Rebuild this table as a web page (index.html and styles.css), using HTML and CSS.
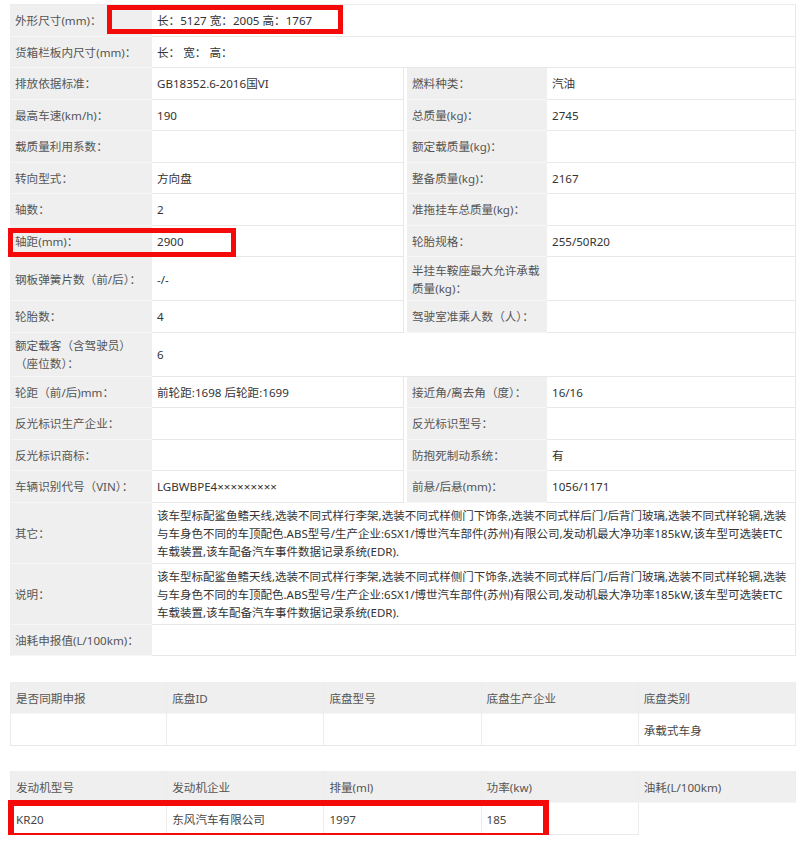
FILE: index.html
```html
<!DOCTYPE html>
<html lang="zh-CN">
<head>
    <meta charset="UTF-8">
    <title>车辆参数</title>
    <link rel="stylesheet" href="styles.css">
</head>
<body>
    <div class="sheet">
        <table class="params">
            <colgroup>
                <col class="c-label">
                <col class="c-value">
                <col class="c-label2">
                <col class="c-value2">
            </colgroup>
            <tr>
                <td class="label">外形尺寸(mm)：</td>
                <td class="value" colspan="3">长：5127 宽：2005 高：1767</td>
            </tr>
            <tr>
                <td class="label">货箱栏板内尺寸(mm)：</td>
                <td class="value" colspan="3">长：&nbsp;宽：&nbsp;高：</td>
            </tr>
            <tr>
                <td class="label">排放依据标准：</td>
                <td class="value">GB18352.6-2016国VI</td>
                <td class="label">燃料种类：</td>
                <td class="value">汽油</td>
            </tr>
            <tr>
                <td class="label">最高车速(km/h)：</td>
                <td class="value">190</td>
                <td class="label">总质量(kg)：</td>
                <td class="value">2745</td>
            </tr>
            <tr>
                <td class="label">载质量利用系数：</td>
                <td class="value"></td>
                <td class="label">额定载质量(kg)：</td>
                <td class="value"></td>
            </tr>
            <tr>
                <td class="label">转向型式：</td>
                <td class="value">方向盘</td>
                <td class="label">整备质量(kg)：</td>
                <td class="value">2167</td>
            </tr>
            <tr>
                <td class="label">轴数：</td>
                <td class="value">2</td>
                <td class="label">准拖挂车总质量(kg)：</td>
                <td class="value"></td>
            </tr>
            <tr>
                <td class="label">轴距(mm)：</td>
                <td class="value">2900</td>
                <td class="label">轮胎规格：</td>
                <td class="value">255/50R20</td>
            </tr>
            <tr class="tall">
                <td class="label">钢板弹簧片数（前/后）：</td>
                <td class="value">-/-</td>
                <td class="label">半挂车鞍座最大允许承载质量(kg)：</td>
                <td class="value"></td>
            </tr>
            <tr>
                <td class="label">轮胎数：</td>
                <td class="value">4</td>
                <td class="label">驾驶室准乘人数（人）：</td>
                <td class="value"></td>
            </tr>
            <tr class="tall">
                <td class="label">额定载客（含驾驶员）（座位数）：</td>
                <td class="value" colspan="3">6</td>
            </tr>
            <tr>
                <td class="label">轮距（前/后)mm：</td>
                <td class="value">前轮距:1698 后轮距:1699</td>
                <td class="label">接近角/离去角（度）：</td>
                <td class="value">16/16</td>
            </tr>
            <tr>
                <td class="label">反光标识生产企业：</td>
                <td class="value"></td>
                <td class="label">反光标识型号：</td>
                <td class="value"></td>
            </tr>
            <tr>
                <td class="label">反光标识商标：</td>
                <td class="value"></td>
                <td class="label">防抱死制动系统：</td>
                <td class="value">有</td>
            </tr>
            <tr>
                <td class="label">车辆识别代号（VIN）：</td>
                <td class="value">LGBWBPE4×××××××××</td>
                <td class="label">前悬/后悬(mm)：</td>
                <td class="value">1056/1171</td>
            </tr>
            <tr>
                <td class="label">其它：</td>
                <td class="value note" colspan="3">该车型标配鲨鱼鳍天线,选装不同式样行李架,选装不同式样侧门下饰条,选装不同式样后门/后背门玻璃,选装不同式样轮辋,选装与车身色不同的车顶配色.ABS型号/生产企业:6SX1/博世汽车部件(苏州)有限公司,发动机最大净功率185kW,该车型可选装ETC车载装置,该车配备汽车事件数据记录系统(EDR).</td>
            </tr>
            <tr>
                <td class="label">说明：</td>
                <td class="value note" colspan="3">该车型标配鲨鱼鳍天线,选装不同式样行李架,选装不同式样侧门下饰条,选装不同式样后门/后背门玻璃,选装不同式样轮辋,选装与车身色不同的车顶配色.ABS型号/生产企业:6SX1/博世汽车部件(苏州)有限公司,发动机最大净功率185kW,该车型可选装ETC车载装置,该车配备汽车事件数据记录系统(EDR).</td>
            </tr>
            <tr>
                <td class="label">油耗申报值(L/100km)：</td>
                <td class="value" colspan="3"></td>
            </tr>
        </table>

        <table class="grid chassis">
            <tr class="head">
                <td>是否同期申报</td>
                <td>底盘ID</td>
                <td>底盘型号</td>
                <td>底盘生产企业</td>
                <td>底盘类别</td>
            </tr>
            <tr>
                <td></td>
                <td></td>
                <td></td>
                <td></td>
                <td>承载式车身</td>
            </tr>
        </table>

        <table class="grid engine">
            <tr class="head">
                <td>发动机型号</td>
                <td>发动机企业</td>
                <td>排量(ml)</td>
                <td>功率(kw)</td>
                <td>油耗(L/100km)</td>
            </tr>
            <tr>
                <td>KR20</td>
                <td>东风汽车有限公司</td>
                <td>1997</td>
                <td>185</td>
            </tr>
        </table>

        <!-- red highlight boxes drawn over the table -->
        <div class="mark mark-size"></div>
        <div class="mark mark-base"></div>
        <div class="mark mark-engine"></div>
    </div>
</body>
</html>
```

FILE: styles.css
```css
body {
    margin: 0;
    background: #fff;
    font-family: "Noto Sans", "Noto Sans CJK SC", sans-serif;
    font-size: 11.6px;
    color: #333;
}

.sheet {
    position: relative;
    padding: 4px 4px 0 10px;
}

table {
    border-collapse: separate;
    border-spacing: 0;
    table-layout: fixed;
}

.params {
    width: 786px;
}

.c-label { width: 142px; }
.c-value { width: 252px; }
.c-label2 { width: 143px; }
.c-value2 { width: 249px; }

.params td {
    height: 24.5px;
    padding: 4px 5px 2px 5px;
    line-height: 18px;
    vertical-align: middle;
    border-bottom: 1px solid #e8e8e8;
}

.params tr.tall td {
    height: 37px;
}

.params td.label {
    background: #efefef;
    color: #555;
    border-bottom-color: #f6f6f6;
}

.params td.value {
    color: #333;
    border-right: 1px solid #e8e8e8;
}

.params td.note {
    font-size: 11.5px;
    padding-right: 6px;
    word-break: break-all;
}

.params tr:first-child td {
    border-top: 1px solid #ececec;
}

.params td.label + td.value + td.label {
    border-left: 3px solid #fff;
}

.grid {
    width: 786px;
}

.grid td {
    height: 25px;
    padding: 4px 5px 2px 5px;
    line-height: 18px;
    color: #444;
    border-right: 1px solid #ececec;
    border-bottom: 1px solid #e8e8e8;
}

.grid td:first-child {
    border-left: 1px solid #ececec;
}

.grid .head td {
    background: #efefef;
    color: #555;
    border-bottom-color: #f6f6f6;
}

.chassis {
    margin-top: 26px;
}

.engine {
    margin-top: 25px;
}

.mark {
    position: absolute;
    border: 5px solid #f50a0a;
}

.mark-size {
    left: 107px;
    top: 5px;
    width: 226px;
    height: 19px;
}

.mark-base {
    left: 8px;
    top: 228px;
    width: 218px;
    height: 19px;
}

.mark-engine {
    left: 8px;
    top: 800px;
    width: 529px;
    height: 27px;
    border-width: 6px;
}
```
